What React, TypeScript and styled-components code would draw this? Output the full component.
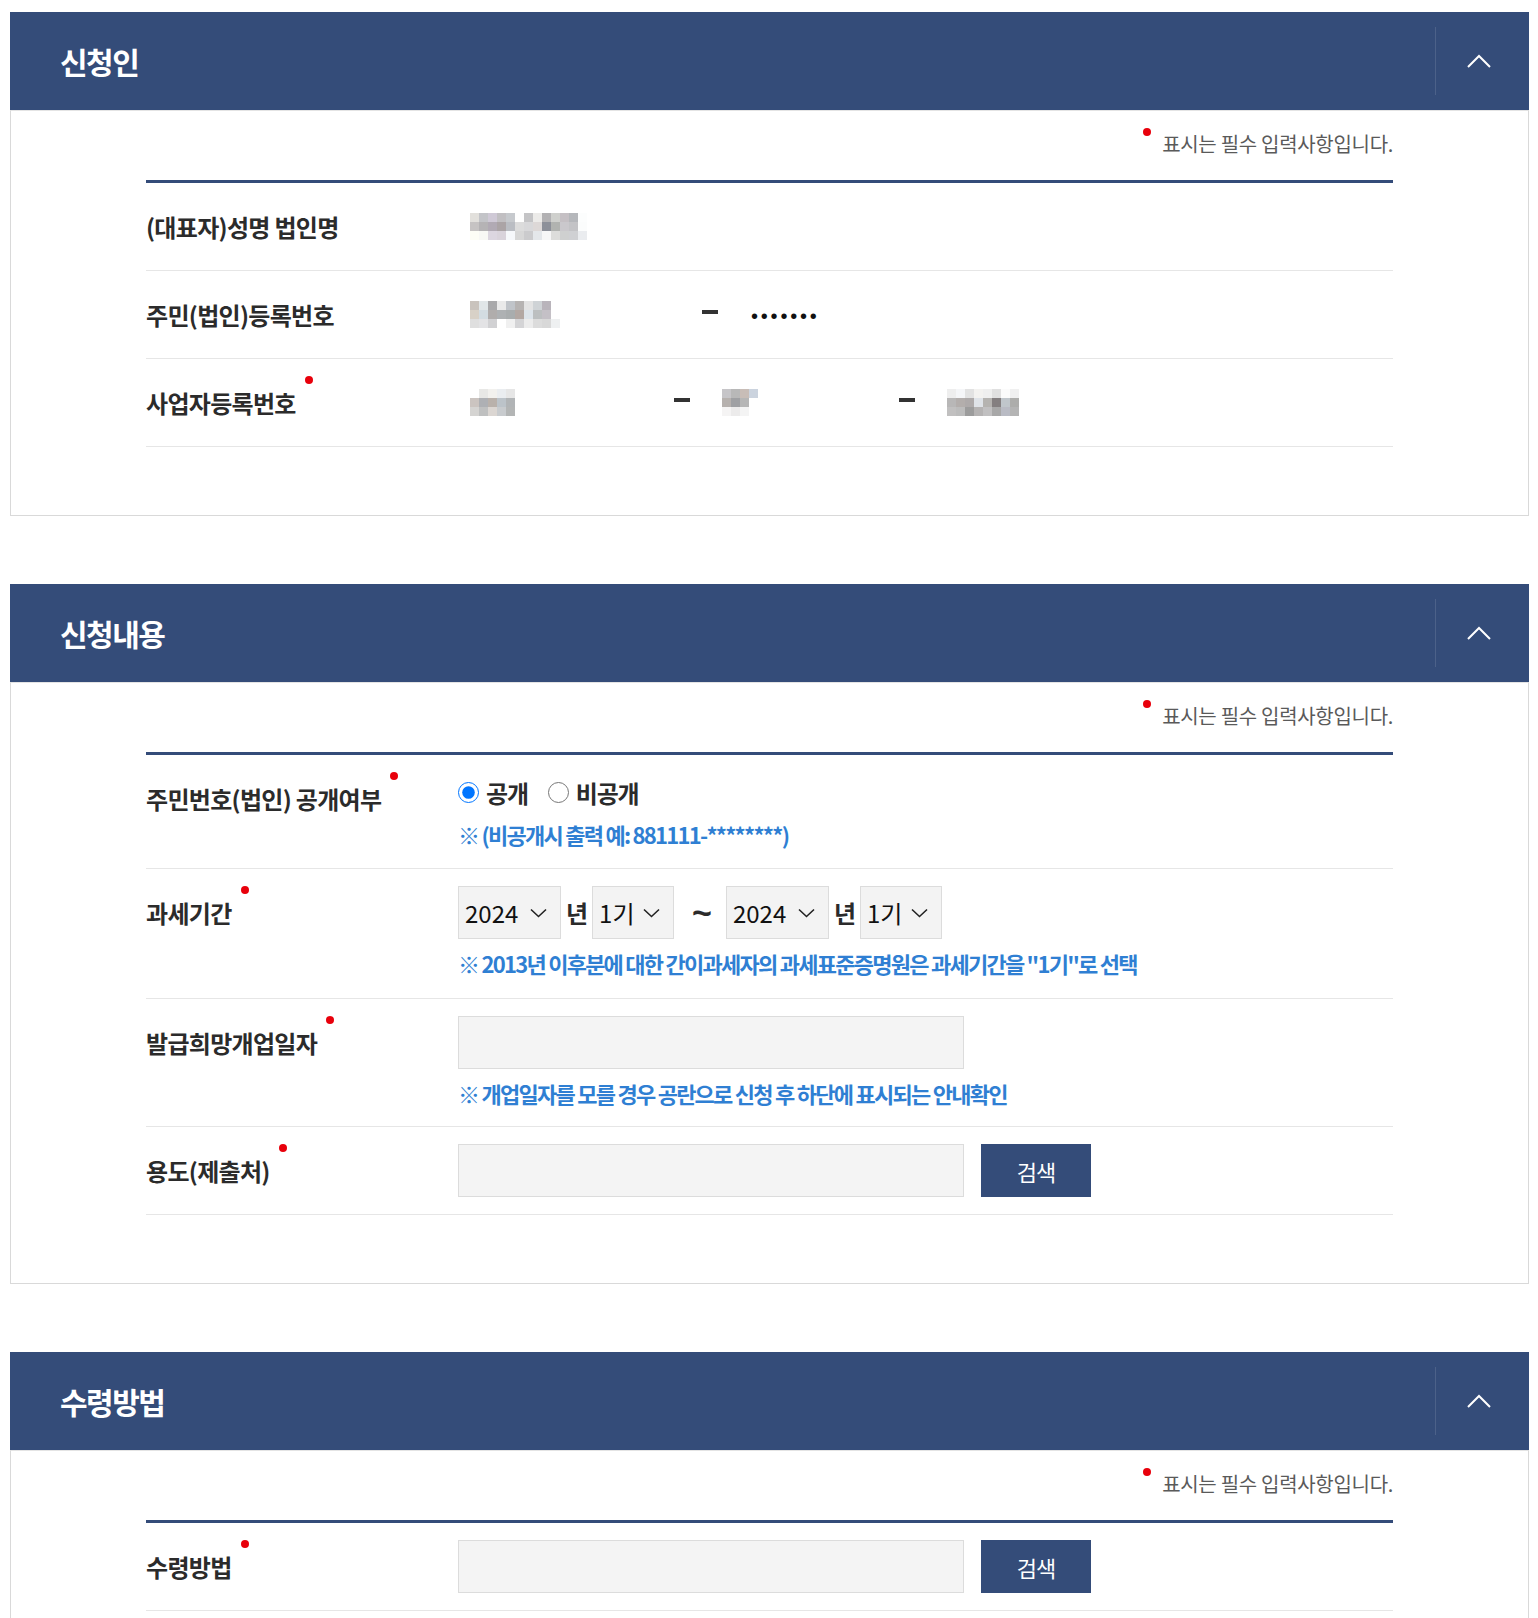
import React from 'react'
import styled, { createGlobalStyle } from 'styled-components'

const NAVY = '#344c79'
const FONT = '"Noto Sans CJK KR", "Noto Sans", sans-serif'

const GlobalStyle = createGlobalStyle`
  * { box-sizing: border-box; }
  body {
    margin: 0;
    background: #fff;
    font-family: ${FONT};
    color: #2b2b2b;
  }
`

// redacted values are shown as a mosaic in the original screen
const nameMosaic = [
  ['#e2e0dc', '#c3c4c8', '#cfc9d6', '#c1bfc2', '#c6c9cd', '#fefefe', '#c4c4c6', '#ecebe9', '#b2b1b3', '#cfd0cd', '#c5c0c4', '#b5b7bb', '#fcfdfd'],
  ['#c6c3c3', '#b5b3b5', '#b1aab4', '#aba4a6', '#babdc3', '#dcdcdc', '#d8d8da', '#ddd8d7', '#8d9099', '#b1b3b0', '#cac8cc', '#c3c3c6', '#fbfcfc'],
  ['#fdfdf6', '#f8f8f5', '#dcd6e0', '#d9d3db', '#f6f8fb', '#d7d7d7', '#cbcbcd', '#e4e7ea', '#f7f7f7', '#dddddb', '#cfd0d0', '#cfd0d3', '#eaecef'],
]
const juminMosaic = [
  ['#c9c3bd', '#e1e6e8', '#a9a9ab', '#eaeaea', '#c0c4c9', '#b6b3b2', '#e3e3e3', '#cfd3d6', '#b9b4bb', '#ffffff'],
  ['#d8d1c7', '#d3dce1', '#b0adac', '#aeb1b3', '#a9adae', '#b3a8a3', '#dde4ea', '#bcbfc0', '#c4c0c6', '#ffffff'],
  ['#dfdfdf', '#e3e3e5', '#d1d1d3', '#ffffff', '#f0f0f0', '#d4d4d6', '#ececec', '#dcdcdc', '#d8d8d8', '#eef0f1'],
]
const bizMosaic1 = [
  ['#ffffff', '#e8e8e6', '#f2f1ee', '#eaedf0', '#e6e6e6'],
  ['#cbc4c0', '#aeb0b4', '#b9b1ab', '#bcc3c9', '#b1b4b6'],
  ['#d5d4d2', '#bfc0c0', '#dbd6d2', '#c8cbce', '#b3b5b5'],
]
const bizMosaic2 = [
  ['#c6c5c8', '#b8b8b8', '#c8bdb7', '#cbd3de'],
  ['#b6b1ae', '#9fa0a3', '#b6b6b6', '#ffffff'],
  ['#f5f4f4', '#ecebeb', '#f4f4f4', '#ffffff'],
]
const bizMosaic3 = [
  ['#eeeeee', '#f5f6f8', '#e2e2e2', '#f3f2f0', '#efefef', '#e0e0e0', '#fbfbfb', '#f0f0f0'],
  ['#b8b7b7', '#b3aeac', '#aeaaaa', '#dfe3e8', '#b5b3b0', '#847f80', '#c0c6cb', '#adadab'],
  ['#c1c0c0', '#bcbcbc', '#9c9c9c', '#b5b3b3', '#c1c0c1', '#a8a8a8', '#b9bbc4', '#b4b4b4'],
]

const ChevronUp = () => (
  <svg width="24" height="14" viewBox="0 0 24 14" fill="none">
    <polyline points="1,13 12,2 23,13" stroke="#fff" strokeWidth="2" />
  </svg>
)

const ChevronDown = () => (
  <svg width="17" height="10" viewBox="0 0 17 10" fill="none">
    <polyline points="1,1.5 8.5,8.5 16,1.5" stroke="#222" strokeWidth="1.6" />
  </svg>
)

const Mosaic = ({ cells }: { cells: string[][] }) => (
  <MosaicGrid $cols={cells[0].length}>
    {cells.flat().map((c, i) => (
      <MosaicCell key={i} $c={c} />
    ))}
  </MosaicGrid>
)

const Section = ({ title, children }: { title: string; children: React.ReactNode }) => (
  <Panel>
    <Header>
      <Title>{title}</Title>
      <Toggle type="button" aria-label="접기">
        <ChevronUp />
      </Toggle>
    </Header>
    <Body>
      <RequiredNote>
        <NoteDot />
        표시는 필수 입력사항입니다.
      </RequiredNote>
      <Table>{children}</Table>
    </Body>
  </Panel>
)

const Row = ({ label, required, children }: { label: string; required?: boolean; children: React.ReactNode }) => (
  <RowWrap>
    <Label>
      {label}
      {required && <LabelDot />}
    </Label>
    <Value>{children}</Value>
  </RowWrap>
)

const YearSelect = () => (
  <SelectBox $w={103}>
    <Select defaultValue="2024">
      <option>2024</option>
      <option>2023</option>
      <option>2022</option>
    </Select>
    <SelectArrow>
      <ChevronDown />
    </SelectArrow>
  </SelectBox>
)

const TermSelect = () => (
  <SelectBox $w={82}>
    <Select defaultValue="1기">
      <option>1기</option>
      <option>2기</option>
    </Select>
    <SelectArrow>
      <ChevronDown />
    </SelectArrow>
  </SelectBox>
)

const App: React.FC = () => {
  return (
    <>
      <GlobalStyle />
      <Page>
        <Section title="신청인">
          <Row label="(대표자)성명 법인명">
            <ValueLine>
              <Field $w={300}>
                <Mosaic cells={nameMosaic} />
              </Field>
            </ValueLine>
          </Row>
          <Row label="주민(법인)등록번호">
            <ValueLine>
              <Field $w={224}>
                <Mosaic cells={juminMosaic} />
              </Field>
              <Dash />
              <Field $w={200}>
                <Masked>•••••••</Masked>
              </Field>
            </ValueLine>
          </Row>
          <Row label="사업자등록번호" required>
            <ValueLine>
              <Field $w={196}>
                <Mosaic cells={bizMosaic1} />
              </Field>
              <Dash />
              <Field $w={169}>
                <Mosaic cells={bizMosaic2} />
              </Field>
              <Dash />
              <Field $w={200}>
                <Mosaic cells={bizMosaic3} />
              </Field>
            </ValueLine>
          </Row>
        </Section>

        <Section title="신청내용">
          <Row label="주민번호(법인) 공개여부" required>
            <RadioLine>
              <RadioOption>
                <Radio type="radio" name="open" defaultChecked />
                공개
              </RadioOption>
              <RadioOption>
                <Radio type="radio" name="open" />
                비공개
              </RadioOption>
            </RadioLine>
            <Hint $mt={5} $mb={1}>※ (비공개시 출력 예: 881111-********)</Hint>
          </Row>
          <Row label="과세기간" required>
            <ValueLine>
              <YearSelect />
              <Unit>년</Unit>
              <TermSelect />
              <Tilde>~</Tilde>
              <YearSelect />
              <Unit>년</Unit>
              <TermSelect />
            </ValueLine>
            <Hint $mt={8} $mb={2}>※ 2013년 이후분에 대한 간이과세자의 과세표준증명원은 과세기간을 "1기"로 선택</Hint>
          </Row>
          <Row label="발급희망개업일자" required>
            <ValueLine>
              <TextInput type="text" />
            </ValueLine>
            <Hint $mt={8}>※ 개업일자를 모를 경우 공란으로 신청 후 하단에 표시되는 안내확인</Hint>
          </Row>
          <Row label="용도(제출처)" required>
            <ValueLine>
              <TextInput type="text" />
              <SearchButton type="button">검색</SearchButton>
            </ValueLine>
          </Row>
        </Section>

        <Section title="수령방법">
          <Row label="수령방법" required>
            <ValueLine>
              <TextInput type="text" />
              <SearchButton type="button">검색</SearchButton>
            </ValueLine>
          </Row>
        </Section>
      </Page>
    </>
  )
}

export default App

const Page = styled.div`
  display: flex;
  flex-direction: column;
  gap: 68px;
  padding: 12px 9px 0 10px;
`

const Panel = styled.section`
  display: flex;
  flex-direction: column;
`

const Header = styled.div`
  display: flex;
  align-items: center;
  height: 98px;
  padding-left: 50px;
  background: ${NAVY};
`

const Title = styled.h2`
  flex: 1;
  margin: 0;
  color: #fff;
  font-size: 30px;
  font-weight: 700;
  letter-spacing: -1.5px;
`

const Toggle = styled.button`
  display: flex;
  align-items: center;
  justify-content: center;
  width: 94px;
  height: 68px;
  padding: 0 8px 0 0;
  border: none;
  border-left: 1px solid rgba(255, 255, 255, 0.12);
  background: transparent;
  cursor: pointer;
`

const Body = styled.div`
  border: 1px solid #d9d9d9;
  border-top-color: #e4e4e4;
  padding: 18px 135px 68px;
`

const RequiredNote = styled.p`
  display: flex;
  justify-content: flex-end;
  align-items: flex-start;
  margin: 0 0 21px;
  font-size: 20px;
  line-height: 30px;
  letter-spacing: -0.3px;
  color: #5a5a5a;
`

const NoteDot = styled.span`
  width: 8px;
  height: 8px;
  margin: -1px 11px 0 0;
  border-radius: 50%;
  background: #e8000b;
`

const Table = styled.div`
  border-top: 3px solid ${NAVY};
`

const RowWrap = styled.div`
  display: grid;
  grid-template-columns: 312px 1fr;
  padding: 17px 0;
  border-bottom: 1px solid #e6e6e6;
`

const Label = styled.div`
  font-size: 24px;
  font-weight: 700;
  line-height: 53px;
  letter-spacing: -0.7px;
  color: #2b2b2b;
  white-space: nowrap;
`

const LabelDot = styled.span`
  display: inline-block;
  vertical-align: top;
  width: 8px;
  height: 8px;
  margin-left: 9px;
  border-radius: 50%;
  background: #e8000b;
`

const Value = styled.div`
  display: flex;
  flex-direction: column;
  align-items: flex-start;
`

const ValueLine = styled.div`
  display: flex;
  align-items: center;
  height: 53px;
`

const Field = styled.div<{ $w: number }>`
  display: flex;
  align-items: center;
  width: ${({ $w }) => $w}px;
  padding-left: 12px;
`

const MosaicGrid = styled.div<{ $cols: number }>`
  display: grid;
  grid-template-columns: repeat(${({ $cols }) => $cols}, 9px);
  grid-auto-rows: 9px;
`

const MosaicCell = styled.span<{ $c: string }>`
  background: ${({ $c }) => $c};
`

const Dash = styled.span`
  width: 16px;
  height: 4px;
  margin: 0 20px 5px;
  background: #333;
`

const Masked = styled.span`
  font-family: 'Liberation Sans', sans-serif;
  font-size: 20px;
  letter-spacing: 2.8px;
  color: #111;
  padding: 4px 0 0 1px;
`

const RadioLine = styled.div`
  display: flex;
  align-items: center;
  gap: 20px;
  height: 41px;
`

const RadioOption = styled.label`
  display: flex;
  align-items: center;
  font-size: 24px;
  font-weight: 700;
  letter-spacing: -1.2px;
  color: #2b2b2b;
  cursor: pointer;
`

const Radio = styled.input`
  width: 21px;
  height: 21px;
  margin: 0 7px 0 0;
`

const Hint = styled.p<{ $mt: number; $mb?: number }>`
  margin: ${({ $mt, $mb = 0 }) => `${$mt}px 0 ${$mb}px`};
  font-size: 22px;
  font-weight: 700;
  line-height: 32px;
  letter-spacing: -1.75px;
  color: #2f7fd3;
  white-space: nowrap;
`

const SelectBox = styled.div<{ $w: number }>`
  position: relative;
  width: ${({ $w }) => $w}px;
  height: 53px;
  border: 1px solid #dcdcdc;
  background: #f3f3f3;
`

const Select = styled.select`
  appearance: none;
  width: 100%;
  height: 100%;
  padding: 0 0 0 6px;
  border: none;
  background: transparent;
  font-family: ${FONT};
  font-size: 24px;
  color: #111;
  outline: none;
`

const SelectArrow = styled.span`
  position: absolute;
  right: 13px;
  top: 50%;
  display: flex;
  transform: translateY(-50%);
  pointer-events: none;
`

const Unit = styled.span`
  margin: 0 5px;
  font-size: 24px;
  font-weight: 700;
  letter-spacing: -1px;
  color: #2b2b2b;
`

const Tilde = styled.span`
  margin: 0 14px 0 18px;
  font-family: 'Liberation Sans', sans-serif;
  font-size: 34px;
  font-weight: 700;
  color: #2b2b2b;
`

const TextInput = styled.input`
  width: 506px;
  height: 53px;
  border: 1px solid #dcdcdc;
  background: #f4f4f4;
  font-family: ${FONT};
  font-size: 22px;
  padding: 0 12px;
  outline: none;
`

const SearchButton = styled.button`
  width: 110px;
  height: 53px;
  margin-left: 17px;
  border: none;
  background: ${NAVY};
  color: #fff;
  font-family: ${FONT};
  font-size: 22px;
  letter-spacing: -1px;
  cursor: pointer;
`
